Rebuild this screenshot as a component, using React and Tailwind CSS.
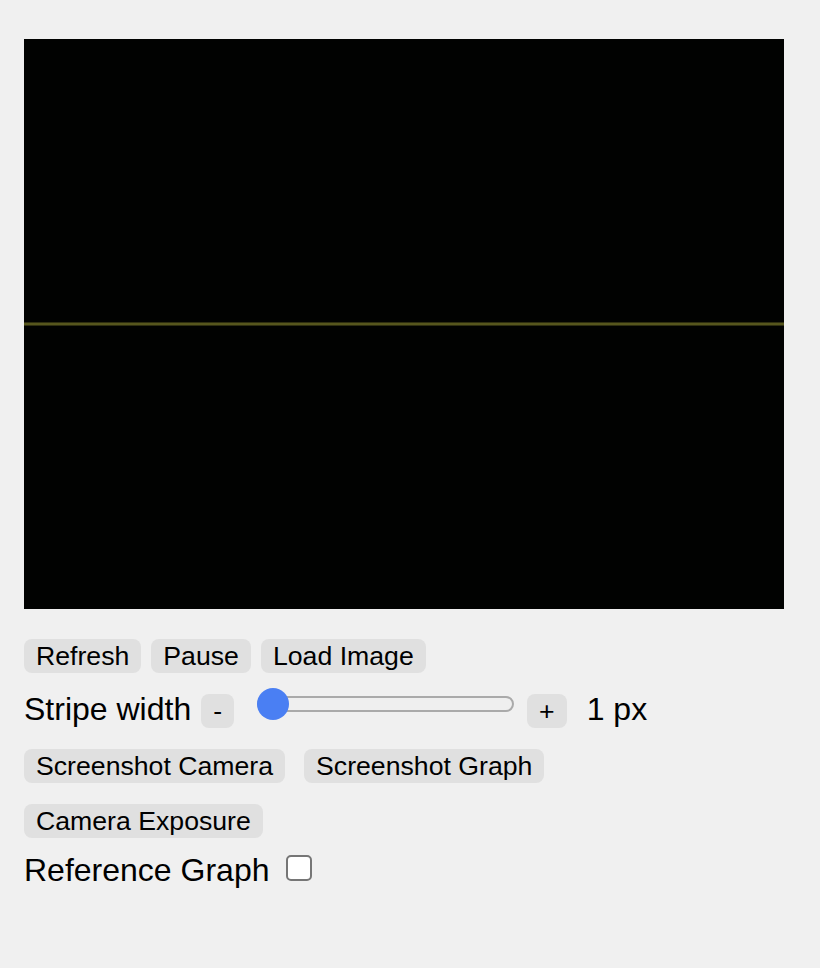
import React, { useState } from 'react'

const font = { fontFamily: '"Liberation Sans", Arial, sans-serif' }

const Btn = ({ children, className = '' }) => (
  <button
    className={`shrink-0 bg-[#e0e0e0] text-black text-[26.67px] leading-[30px] px-3 py-[2px] rounded-lg ${className}`}
  >
    {children}
  </button>
)

const Slider = () => (
  <div className="relative w-[257px] h-[32px] ml-[23px] shrink-0">
    <div className="absolute left-0 right-0 top-[8px] h-[16px] rounded-full border-2 border-[#aaaaaa] bg-[#efefef]" />
    {/* thumb */}
    <div className="absolute left-0 top-0 w-[32px] h-[32px] rounded-full bg-[#4a7ff3]" />
  </div>
)

export default function App() {
  const [checked, setChecked] = useState(false)

  return (
    <div className="min-h-[968px] bg-[#f0f0f0] pt-[39px] pl-[24px] text-black" style={font}>
      {/* camera view */}
      <div className="w-[760px] h-[570px] bg-[#010201] flex flex-col">
        <div className="h-[283px]" />
        <div className="h-[1px] bg-[#2e2e10]" />
        <div className="h-[2px] bg-[#56561d]" />
        <div className="h-[1px] bg-[#2e2e10]" />
      </div>

      <div className="flex items-center gap-[10px] mt-[30px]">
        <Btn>Refresh</Btn>
        <Btn>Pause</Btn>
        <Btn>Load Image</Btn>
      </div>

      <div className="flex items-baseline mt-[15px] h-[37px]">
        <span className="text-[32px] leading-[37px]">Stripe width</span>
        <Btn className="ml-[10px]">-</Btn>
        <Slider />
        <Btn className="ml-[13px]">+</Btn>
        <span className="text-[32px] leading-[37px] ml-[20px]">1 px</span>
      </div>

      <div className="flex items-center gap-[19px] mt-[24px]">
        <Btn>Screenshot Camera</Btn>
        <Btn>Screenshot Graph</Btn>
      </div>

      <div className="flex items-center mt-[21px]">
        <Btn>Camera Exposure</Btn>
      </div>

      <div className="flex items-start mt-[14px] h-[37px]">
        <span className="text-[32px] leading-[37px]">Reference Graph</span>
        <button
          onClick={() => setChecked(!checked)}
          className="ml-[17px] mt-[3px] w-[26px] h-[26px] rounded-[5px] border-2 border-[#767676] bg-white"
        />
      </div>
    </div>
  )
}
